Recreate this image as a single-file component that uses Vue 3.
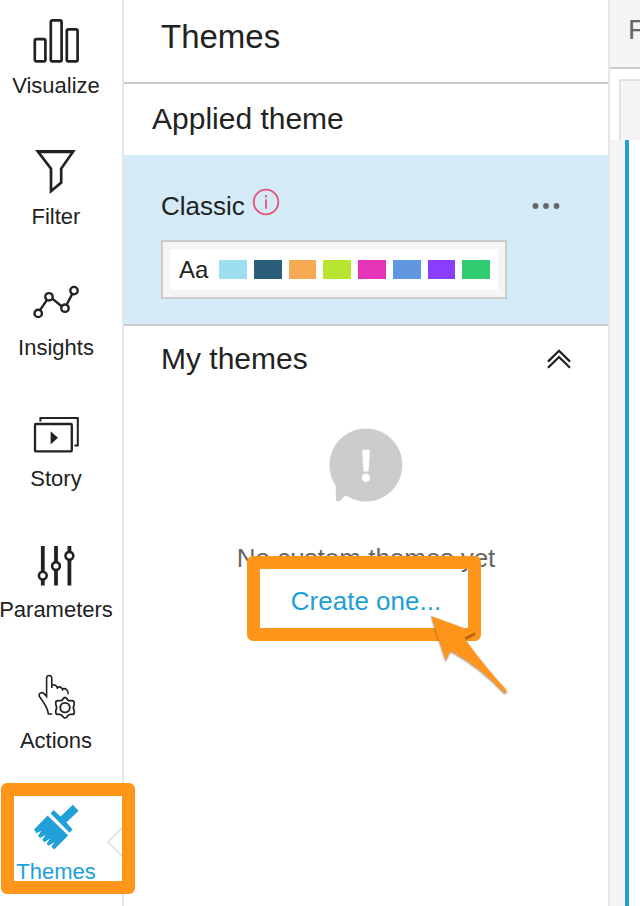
<script setup>
const swatches = ['#9ddff0', '#2a5d78', '#f6aa54', '#b8e630', '#e534b8', '#6196e1', '#8a3dfc', '#31cc72']
</script>

<template>
  <div class="app">
    <nav class="rail" aria-label="Tools">
      <button class="tool" type="button">
        <svg class="tool-icon" viewBox="0 0 48 48" fill="none" stroke="#222" stroke-width="2.7">
          <rect x="2.8" y="22.1" width="10.6" height="22.2" rx="1.6" />
          <rect x="18.8" y="3.3" width="10.8" height="41" rx="1.6" />
          <rect x="34.8" y="12.3" width="10.8" height="32" rx="1.6" />
        </svg>
        <span>Visualize</span>
      </button>
      <button class="tool" type="button">
        <svg class="tool-icon" viewBox="0 0 48 48" fill="none" stroke="#222" stroke-width="2.7">
          <path d="M5.8 3.4H41.2L29.2 20.6V34.6L19 43.2V20.6Z" />
          <path d="M5 3.6H42" stroke-width="3.2" />
        </svg>
        <span>Filter</span>
      </button>
      <button class="tool" type="button">
        <svg class="tool-icon" viewBox="0 0 48 48" fill="none" stroke="#222" stroke-width="2.4">
          <path d="M8 31.2L15 20.8M20 19.4L29.6 27.2M34.6 25.8L40.6 14.4" />
          <circle cx="6.2" cy="34.4" r="3.7" />
          <circle cx="17" cy="17.8" r="3.7" />
          <circle cx="33" cy="29.2" r="3.7" />
          <circle cx="42" cy="11.6" r="3.7" />
        </svg>
        <span>Insights</span>
      </button>
      <button class="tool" type="button">
        <svg class="tool-icon" viewBox="0 0 48 48" fill="none" stroke="#222" stroke-width="2.3">
          <rect x="3" y="14" width="36.8" height="27.4" rx="1" />
          <path d="M8.4 11.4V8H45.8V35.4H42.4" stroke-width="2" />
          <path d="M18.6 21.2L26 27.8L18.6 34.4Z" fill="#222" stroke="none" />
        </svg>
        <span>Story</span>
      </button>
      <button class="tool" type="button">
        <svg class="tool-icon" viewBox="0 0 48 48" fill="#fff" stroke="#222">
          <path d="M10.8 5V44.4M24 5V44.4M37.4 5V44.4" stroke-width="3.8" />
          <circle cx="10.8" cy="34.6" r="3.9" stroke-width="2.6" />
          <circle cx="24" cy="25" r="3.9" stroke-width="2.6" />
          <circle cx="37.4" cy="14.8" r="3.9" stroke-width="2.6" />
        </svg>
        <span>Parameters</span>
      </button>
      <button class="tool" type="button">
        <svg class="tool-icon" viewBox="0 0 48 48" fill="none" stroke="#222" stroke-width="1.6">
          <path d="M20.2 42H16.4C15.8 36 12.4 31 7.4 24.6C6.2 21.4 9.6 19.4 12 21.6L14.6 24.4V6.6C14.6 2.4 19.8 2.4 19.8 6.6V16M19.8 13.4C22.4 12 25 13 25.6 17M25.4 15.4C28 14.2 30 15.2 30.8 18.6M30.8 16.8C34 16 36.4 18.4 36.2 22.2" />
          <circle cx="33" cy="35.6" r="4.8" stroke-width="1.8" />
          <path d="M30.2 28Q33 23 35.8 28Q37.4 29.4 38.4 28.6Q43.4 28 42 32.8Q40.8 35.6 42 38Q43.8 43 38.6 42.4Q37 42.2 35.8 43.8Q33 48.4 30.2 43.8Q29 42.2 27.4 42.4Q22.4 43 24 38Q25.2 35.6 24 32.8Q22.4 28 27.6 28.6Q29 29 30.2 28Z" stroke-width="1.8" />
        </svg>
        <span>Actions</span>
      </button>
      <button class="tool active" type="button" aria-current="page">
        <svg class="tool-icon" viewBox="0 0 48 48" fill="#219fd9">
          <path d="M40.8 1.8L46.6 7.8L34.4 19.6L40.6 26.4L37.6 29.8L18.6 10.4L21.6 7L28.6 13.6Z" />
          <path d="M15.6 12.4L36.2 32.6L22.2 46.4L19.4 43.8L22.4 39L16.8 42.8L14.6 40.8L18.6 35.2L12.4 39.2L10.2 37L13.8 31.8L8 35L6 33L9.4 27.8L4.4 30.2L2 26.6Z" />
        </svg>
        <span>Themes</span>
        <svg class="notch" viewBox="0 0 16 32" fill="#fff" stroke="#ddd" stroke-width="1.5">
          <path d="M16 1L1 16L16 31" />
        </svg>
        <i class="highlight"></i>
      </button>
    </nav>

    <main class="panel">
      <header class="panel-head"><h1>Themes</h1></header>
      <h2 class="applied-title">Applied theme</h2>
      <section class="applied">
        <div class="theme-row">
          <span class="theme-name">Classic</span>
          <svg class="info" viewBox="0 0 28 28" role="img" aria-label="Theme information">
            <circle cx="14" cy="14" r="12.3" fill="none" stroke="#e8527a" stroke-width="1.8" />
            <path d="M14 11.6V20.8M14 7V9.4" stroke="#e8527a" stroke-width="1.8" />
          </svg>
          <button class="more" type="button" aria-label="Theme options">
            <svg viewBox="0 0 28 8" fill="#666">
              <circle cx="3.5" cy="4" r="2.9" />
              <circle cx="14" cy="4" r="2.9" />
              <circle cx="24.5" cy="4" r="2.9" />
            </svg>
          </button>
        </div>
        <div class="preview">
          <div class="preview-inner">
            <span class="sample">Aa</span>
            <i v-for="c in swatches" :key="c" class="swatch" :style="{ background: c }"></i>
          </div>
        </div>
      </section>
      <section class="mine">
        <div class="mine-head">
          <h2>My themes</h2>
          <button class="collapse" type="button" aria-label="Collapse my themes">
            <svg viewBox="0 0 24 20" fill="none" stroke="#222" stroke-width="2.3">
              <path d="M1 12.6L12 1.8L23 12.6M1 18.8L12 8L23 18.8" />
            </svg>
          </button>
        </div>
        <div class="empty">
          <svg class="bubble" viewBox="0 0 74 74">
            <path d="M37 .5A36.5 36.5 0 1 1 16.5 67.3L11.5 72.4Q9.4 74.4 7 72.6L6.7 57.4A36.5 36.5 0 0 1 37 .5Z" fill="#ccc" />
            <path d="M33.2 23Q33.2 21.8 34.4 21.8H39.6Q40.8 21.8 40.8 23L39.6 43.4H34.4Z" fill="#fff" />
            <circle cx="37" cy="49.8" r="4.2" fill="#fff" />
          </svg>
          <p>No custom themes yet</p>
          <div class="create">
            <a href="#create">Create one...</a>
            <i class="highlight"></i>
            <svg class="pointer" viewBox="0 0 84 86">
              <path d="M3 4L48 20.5L37 26L39 30Q58 56 78.4 78Q79.4 81.4 76 81Q52 55 22.7 39Q20 43 17.7 49Z" fill="#ff961b" />
              <path d="M37 26L47 21" stroke="#a8600f" stroke-width="1.3" />
            </svg>
          </div>
        </div>
      </section>
    </main>

    <aside class="canvas">
      <div class="canvas-bar">F</div>
      <div class="tabs"><div class="tab"></div></div>
      <div class="sheet"></div>
    </aside>
  </div>
</template>

<style>
body {
  margin: 0;
}
</style>

<style scoped>
.app {
  display: flex;
  min-height: 100vh;
  overflow: hidden;
  background: #fff;
  color: #222;
  font-family: "Liberation Sans", Arial, sans-serif;
}
* {
  box-sizing: border-box;
}
h1,
h2,
p {
  margin: 0;
  font-weight: 400;
}
button {
  padding: 0;
  border: 0;
  background: none;
  color: inherit;
  font: inherit;
  cursor: pointer;
}
svg {
  display: block;
}
.rail {
  flex: none;
  width: 124px;
  padding-right: 10px;
  border-right: 2px solid #e6e6e6;
}
.tool {
  position: relative;
  display: flex;
  flex-direction: column;
  align-items: center;
  gap: 8px;
  width: 100%;
  height: 131px;
  padding-top: 17px;
  font-size: 22px;
  line-height: 26px;
}
.tool-icon {
  width: 48px;
  height: 48px;
}
.active {
  color: #219fd9;
}
.notch {
  position: absolute;
  top: 40px;
  left: 107px;
  width: 16px;
  height: 32px;
}
.highlight {
  position: absolute;
  border: 13px solid #ff961b;
  border-radius: 6px;
}
.tool .highlight {
  top: -3px;
  left: 1px;
  width: 134px;
  height: 111px;
}
.panel {
  flex: 1;
  min-width: 0;
}
.panel-head {
  height: 84px;
  padding: 18px 37px 0;
  border-bottom: 2px solid #ccc;
}
h1 {
  font-size: 33px;
  line-height: 38px;
}
h2 {
  font-size: 30px;
  line-height: 34px;
}
.applied-title {
  padding: 18px 28px 19px;
}
.applied {
  padding: 32px 37px 25px;
  border-bottom: 2px solid #ccc;
  background: #d4ebf7;
}
.theme-row {
  display: flex;
  align-items: center;
  gap: 7px;
  height: 38px;
}
.theme-name {
  font-size: 26px;
  line-height: 30px;
}
.info {
  width: 28px;
  height: 28px;
  margin-bottom: 8px;
}
.more {
  margin-left: auto;
  margin-right: 11px;
}
.more svg {
  width: 28px;
  height: 8px;
}
.preview {
  max-width: 346px;
  margin-top: 15px;
  padding: 7px;
  border: 2px solid #ccc;
  background: #f5f5f5;
}
.preview-inner {
  display: flex;
  align-items: center;
  gap: 7px;
  height: 41px;
  padding: 0 8px 0 9px;
  background: #fff;
}
.sample {
  width: 33px;
  font-size: 24px;
  line-height: 28px;
}
.swatch {
  flex: 1;
  height: 19px;
}
.mine {
  padding: 16px 37px;
}
.mine-head {
  display: flex;
  align-items: center;
  justify-content: space-between;
}
.collapse svg {
  width: 24px;
  height: 20px;
}
.empty {
  display: flex;
  flex-direction: column;
  align-items: center;
  padding-top: 52px;
  font-size: 26px;
  line-height: 30px;
}
.bubble {
  width: 74px;
  height: 74px;
}
.empty p {
  margin-top: 41px;
  color: #666;
}
.create {
  position: relative;
  margin-top: 13px;
}
.create a {
  color: #219fd9;
  text-decoration: none;
}
.create .highlight {
  top: -30px;
  left: -44px;
  width: 234px;
  height: 85px;
}
.pointer {
  position: absolute;
  top: 26px;
  left: 137px;
  width: 84px;
  height: 86px;
  filter: drop-shadow(0 1px 1px rgba(0, 0, 0, 0.45));
}
.canvas {
  display: flex;
  flex: none;
  flex-direction: column;
  width: 32px;
  overflow: hidden;
  border-left: 2px solid #e6e6e6;
  background: #f5f5f5;
}
.canvas-bar {
  height: 69px;
  padding: 14px 0 0 18px;
  border-bottom: 2px solid #ccc;
  color: #666;
  font-size: 28px;
  line-height: 32px;
}
.tabs {
  height: 71px;
  padding: 10px 0 0 9px;
  background: #fff;
}
.tab {
  height: 61px;
  border-top: 2px solid #e2e2e2;
  border-left: 2px solid #e2e2e2;
  background: #f5f5f5;
}
.sheet {
  flex: 1;
  margin-left: 15px;
  border-left: 4px solid #219fd9;
  background: #fff;
}
</style>
